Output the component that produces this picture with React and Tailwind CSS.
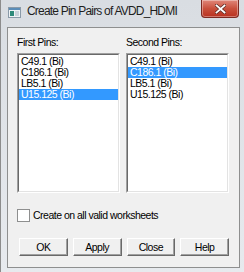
import { useState } from 'react'

const pins = ['C49.1 (Bi)', 'C186.1 (Bi)', 'LB5.1 (Bi)', 'U15.125 (Bi)']

function PinList({ selected, onSelect }) {
  return (
    <div className="h-[140px] w-[103px] border border-t-[#a0a0a0] border-l-[#a0a0a0] border-b-white border-r-white bg-white">
      <div className="h-full border border-t-[#696969] border-l-[#696969] border-b-[#e3e3e3] border-r-[#e3e3e3] pt-[1px]">
        {pins.map((pin, i) => (
          <div
            key={pin}
            onClick={() => onSelect(i)}
            className={`h-[11px] pl-[2px] leading-[11px] ${
              i === selected ? 'bg-[#3399ff] text-white' : 'text-black'
            }`}
          >
            {pin}
          </div>
        ))}
      </div>
    </div>
  )
}

function DlgButton({ children }) {
  return (
    <button
      type="button"
      className="h-[18px] w-[49px] border border-t-white border-l-white border-b-[#696969] border-r-[#696969] bg-[#f0f0f0] leading-none text-black shadow-[inset_-1px_-1px_0_#a0a0a0]"
    >
      {children}
    </button>
  )
}

export default function App() {
  const [first, setFirst] = useState(3)
  const [second, setSecond] = useState(1)
  const [allSheets, setAllSheets] = useState(false)

  return (
    <div
      className="flex h-[272px] w-[244px] flex-col overflow-hidden border-l border-[#8c8c8c] bg-gradient-to-b from-[#d9dde2] to-[#e7eaee]"
      style={{ fontFamily: '"Liberation Sans", Arial, sans-serif' }}
    >
      {/* title bar */}
      <div className="flex h-[27px] shrink-0 items-start">
        <svg width="13" height="11" viewBox="0 0 13 11" className="ml-[7px] mt-[7px] shrink-0">
          <rect x="0.5" y="0.5" width="12" height="10" fill="#eef2f5" stroke="#8a9aa8" />
          <rect x="1" y="1" width="11" height="2" fill="#5b8db8" />
          <rect x="2" y="4" width="4" height="5" fill="#2e8a7a" />
          <rect x="7" y="4" width="4" height="5" fill="#c8d2da" />
        </svg>
        <span className="ml-[6px] mt-[4px] whitespace-nowrap text-[12px] leading-[15px] tracking-[-0.8px] text-[#1e1e1e]">
          Create Pin Pairs of AVDD_HDMI
        </span>
        <div className="ml-auto mr-[5px] flex h-[18px] w-[38px] shrink-0 items-center justify-center rounded-b-[4px] border border-t-0 border-[#7d2a22] bg-gradient-to-b from-[#e0877a] via-[#c9503c] to-[#b8301f] shadow-[inset_0_0_0_1px_rgba(255,255,255,0.35)]">
          <svg width="11" height="10" viewBox="0 0 11 10">
            <path d="M1.5 1.5 L9.5 8.5 M9.5 1.5 L1.5 8.5" stroke="#5a2a24" strokeWidth="3.2" strokeLinecap="square" />
            <path d="M1.5 1.5 L9.5 8.5 M9.5 1.5 L1.5 8.5" stroke="#ffffff" strokeWidth="1.8" strokeLinecap="square" />
          </svg>
        </div>
      </div>

      {/* client area */}
      <div className="mb-[4px] ml-[6px] mr-[4px] flex flex-1 flex-col border border-[#8e8f8f] bg-[#f0f0f0] pb-[11px] pl-[9px] pr-[10px] pt-[8px] text-[10.5px] tracking-[-0.5px] text-black">
        <div className="flex gap-[6px]">
          <div className="flex flex-col">
            <div className="mb-[5px] h-[12px] leading-[12px]">First Pins:</div>
            <PinList selected={first} onSelect={setFirst} />
          </div>
          <div className="flex flex-col">
            <div className="mb-[5px] h-[12px] leading-[12px]">Second Pins:</div>
            <PinList selected={second} onSelect={setSecond} />
          </div>
        </div>

        <label className="mt-[16px] flex items-center gap-[2px]">
          <span
            onClick={() => setAllSheets(v => !v)}
            className="flex h-[13px] w-[13px] items-center justify-center border border-[#8e8f8f] bg-white text-[10px] leading-none"
          >
            {allSheets ? '✓' : ''}
          </span>
          <span className="ml-[1px] leading-[13px]">Create on all valid worksheets</span>
        </label>

        <div className="mt-auto flex gap-[5px] pl-[2px]">
          <DlgButton>OK</DlgButton>
          <DlgButton>Apply</DlgButton>
          <DlgButton>Close</DlgButton>
          <DlgButton>Help</DlgButton>
        </div>
      </div>
    </div>
  )
}
